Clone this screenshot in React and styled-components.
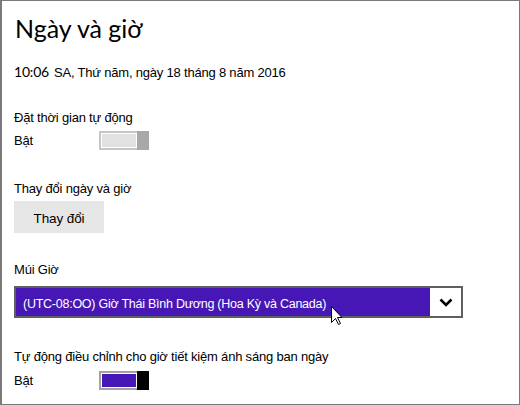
import React from "react";
import styled, { createGlobalStyle } from "styled-components";

const Global = createGlobalStyle`
  html, body { margin: 0; padding: 0; background: #fff; }
  body { font-family: "Liberation Sans", Arial, sans-serif; color: #000; }
`;

const Window = styled.div`
  position: relative;
  box-sizing: border-box;
  width: 520px;
  height: 405px;
  border: 1px solid #7a7a7a;
  border-left-width: 2px;
  padding-left: 12px;
  background: #fff;
  overflow: hidden;
  font-size: 13px;
  letter-spacing: -0.2px;
  line-height: 18px;
`;

const Title = styled.h1`
  margin: 12px 0 0 0;
  font-family: Lato, "Liberation Sans", sans-serif;
  font-weight: 400;
  font-size: 25px;
  line-height: 30px;
  letter-spacing: 0;
  padding-left: 1px;
`;

const TimeLine = styled.div`
  margin-top: 20px;
`;

const Clock = styled.span`
  font-family: Lato, "Liberation Sans", sans-serif;
  font-weight: 400;
  font-size: 14px;
  letter-spacing: -0.2px;
  color: #000;
  margin-right: 5px;
`;

const Group = styled.div`
  margin-top: ${(p) => p.$top}px;
  display: flex;
  flex-direction: column;
  align-items: flex-start;
  gap: ${(p) => p.$gap}px;
`;

const Label = styled.div``;

const SwitchRow = styled.div`
  display: flex;
  align-items: center;
  height: 19px;
  line-height: 19px;
`;

const StateText = styled.span`
  width: 85px;
`;

const Switch = styled.div`
  display: flex;
  width: 50px;
  height: 19px;
`;

const Track = styled.div`
  flex: 1;
  box-sizing: border-box;
  border: 2px solid ${(p) => p.$ring};
  border-right: 0;
  background: ${(p) => p.$fill};
  box-shadow: inset 0 0 0 1px #fff;
`;

const Thumb = styled.div`
  width: 12px;
  background: ${(p) => p.$color};
`;

const Button = styled.button`
  box-sizing: border-box;
  width: 90px;
  height: 32px;
  padding: 3px 0 0 0;
  border: 0;
  background: #e6e6e6;
  font-family: "Liberation Sans", Arial, sans-serif;
  font-size: 13.5px;
  letter-spacing: -0.1px;
  color: #000;
  line-height: 18px;
`;

const Select = styled.div`
  box-sizing: border-box;
  display: flex;
  width: 449px;
  height: 32px;
  border: 2px solid #5f5f5f;
`;

const SelectValue = styled.div`
  flex: 1;
  display: flex;
  align-items: center;
  padding: 3px 0 0 7px;
  background: #4617b4;
  color: #fff;
  font-size: 12.5px;
  letter-spacing: -0.25px;
`;

const SelectArrow = styled.div`
  width: 31px;
  display: flex;
  align-items: center;
  justify-content: center;
  background: #fff;
`;

const Cursor = styled.svg`
  position: absolute;
  left: 328px;
  top: 304px;
`;

export default function App() {
  return (
    <>
      <Global />
      <Window>
        <Title>Ngày và giờ</Title>
        <TimeLine>
          <Clock>10:06</Clock>SA, Thứ năm, ngày 18 tháng 8 năm 2016
        </TimeLine>

        <Group $top={27} $gap={4}>
          <Label>Đặt thời gian tự động</Label>
          <SwitchRow>
            <StateText>Bật</StateText>
            <Switch>
              <Track $ring="#c6c6c6" $fill="#e1e1e1" />
              <Thumb $color="#a8a8a8" />
            </Switch>
          </SwitchRow>
        </Group>

        <Group $top={30} $gap={3}>
          <Label>Thay đổi ngày và giờ</Label>
          <Button>Thay đổi</Button>
        </Group>

        <Group $top={28} $gap={7}>
          <Label>Múi Giờ</Label>
          <Select>
            <SelectValue>(UTC-08:OO) Giờ Thái Bình Dương (Hoa Kỳ và Canada)</SelectValue>
            <SelectArrow>
              <svg width="14" height="9" viewBox="0 0 14 9">
                <path d="M1.5 1.5 L7 7 L12.5 1.5" fill="none" stroke="#000" strokeWidth="2.6" />
              </svg>
            </SelectArrow>
          </Select>
        </Group>

        <Group $top={30} $gap={5}>
          <Label>Tự động điều chỉnh cho giờ tiết kiệm ánh sáng ban ngày</Label>
          <SwitchRow>
            <StateText>Bật</StateText>
            <Switch>
              <Track $ring="#a2a2a2" $fill="#4617b4" />
              <Thumb $color="#000" />
            </Switch>
          </SwitchRow>
        </Group>

        <Cursor width="13" height="21" viewBox="0 0 13 21">
          <path
            d="M1.5 1.5 L1.5 17.5 L5.5 13.5 L8.5 19.5 L10.5 18.5 L7.5 12.5 L12 12.5 Z"
            fill="#fff"
            stroke="#000"
            strokeWidth="1"
          />
        </Cursor>
      </Window>
    </>
  );
}
